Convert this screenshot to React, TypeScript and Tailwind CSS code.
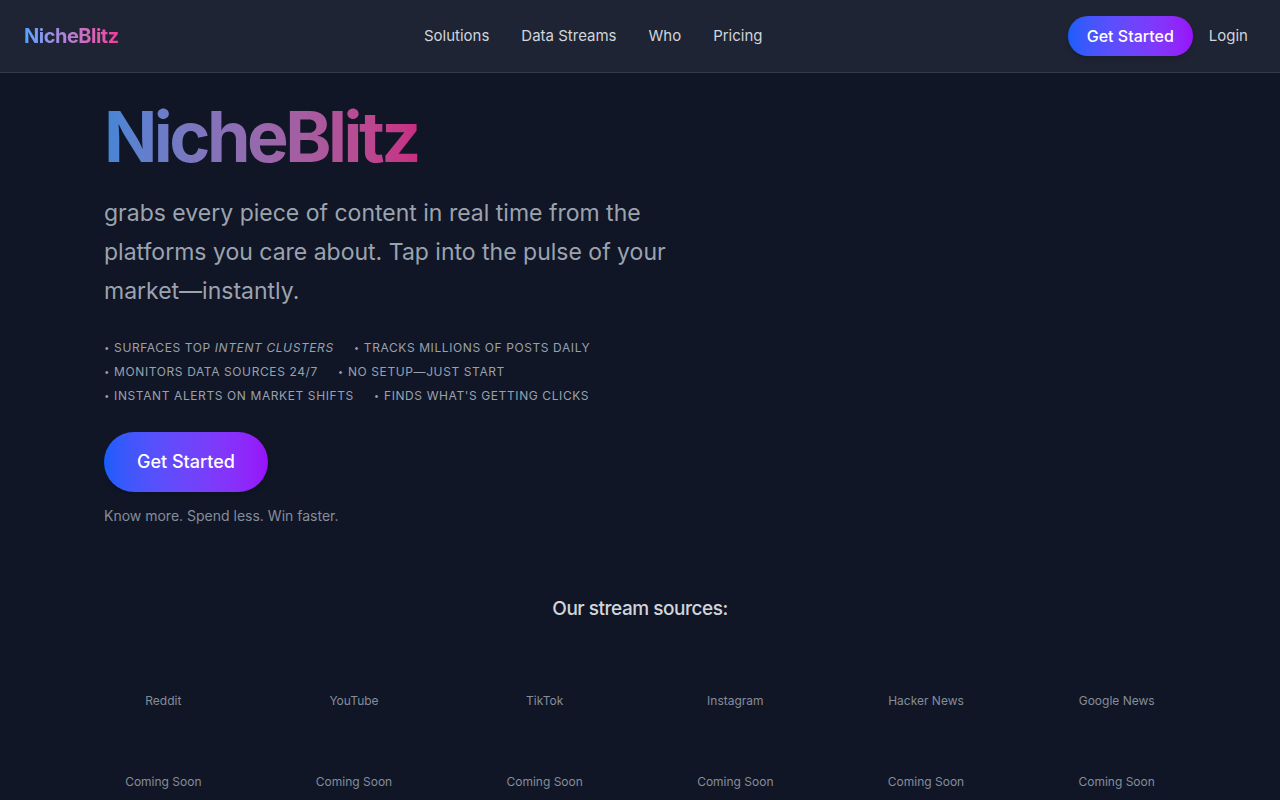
import type { ReactNode } from "react";

const navLinks = ["Solutions", "Data Streams", "Who", "Pricing"];

const sources = ["Reddit", "YouTube", "TikTok", "Instagram", "Hacker News", "Google News"];

function Header() {
  return (
    <header className="border-b border-[#343a48] bg-[#1e2433]">
      <div className="flex h-[72px] items-center justify-between pr-8 pl-6">
        <a
          href="#home"
          className="bg-gradient-to-r from-blue-400 to-pink-500 bg-clip-text text-xl font-bold tracking-tight text-transparent"
        >
          NicheBlitz
        </a>
        <nav aria-label="Main" className="flex items-center gap-8">
          {navLinks.map((label) => (
            <a key={label} href="#" className="text-[15px] leading-6 text-gray-300">
              {label}
            </a>
          ))}
        </nav>
        <div className="flex items-center gap-4">
          <button
            type="button"
            className="h-10 rounded-full bg-gradient-to-r from-blue-600 to-purple-600 px-[19px] text-base font-medium text-white shadow-md"
          >
            Get Started
          </button>
          <a href="#login" className="text-[15px] leading-6 text-gray-300">
            Login
          </a>
        </div>
      </div>
    </header>
  );
}

function Highlight({ children }: { children: ReactNode }) {
  return (
    <li>
      <span className="px-px font-['Liberation_Sans',sans-serif] text-[10px] leading-none">•</span> {children}
    </li>
  );
}

function Hero() {
  return (
    <section className="flex flex-col items-start">
      <h1 className="bg-gradient-to-r from-blue-400 to-pink-500 bg-clip-text pb-1 text-[70px] font-bold leading-[72px] tracking-tighter text-transparent opacity-80">
        NicheBlitz
      </h1>
      <p className="mt-[17px] max-w-[576px] text-[23px] leading-[39px] text-[#9ca3af]">
        grabs every piece of content in real time from the platforms you care about. Tap into the pulse of your
        market—instantly.
      </p>
      <ul className="mt-[25px] flex max-w-[512px] flex-wrap gap-x-5 text-xs leading-6 tracking-wider text-gray-400 uppercase">
        <Highlight>
          Surfaces top <em>intent clusters</em>
        </Highlight>
        <Highlight>Tracks millions of posts daily</Highlight>
        <Highlight>Monitors data sources 24/7</Highlight>
        <Highlight>No setup—just start</Highlight>
        <Highlight>Instant alerts on market shifts</Highlight>
        <Highlight>Finds what's getting clicks</Highlight>
      </ul>
      <button
        type="button"
        className="mt-6 h-[60px] rounded-full bg-gradient-to-r from-blue-600 to-purple-600 px-[33px] text-lg font-medium text-white shadow-md"
      >
        Get Started
      </button>
      <p className="mt-3.5 text-sm text-[#858d9c]">Know more. Spend less. Win faster.</p>
    </section>
  );
}

function Sources() {
  return (
    <section className="mt-[69px]">
      <h2 className="text-center text-[19px] leading-7 font-medium tracking-tight text-gray-300">
        Our stream sources:
      </h2>
      <ul className="mt-[70px] grid grid-cols-6 gap-x-[72px] text-center text-xs text-[#858d9c]">
        {sources.map((name) => (
          <li key={name} className="flex flex-col gap-[65px]">
            <span>{name}</span>
            <span>Coming Soon</span>
          </li>
        ))}
      </ul>
    </section>
  );
}

export default function App() {
  return (
    <div className="min-h-screen bg-[#101625] font-['Inter',sans-serif]">
      <Header />
      <main className="mx-auto max-w-[1136px] px-8 pt-7">
        <Hero />
        <Sources />
      </main>
    </div>
  );
}
